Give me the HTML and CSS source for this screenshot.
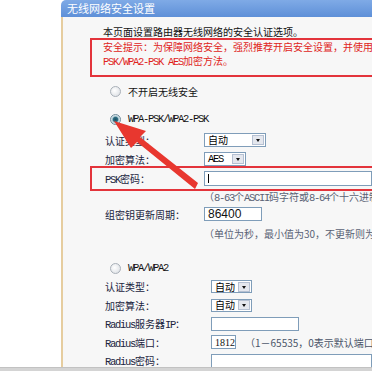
FILE: index.html
```html
<!DOCTYPE html>
<html lang="zh-CN">
<head>
    <meta charset="UTF-8">
    <meta name="viewport" content="width=device-width, initial-scale=1.0">
    <title>无线网络安全设置</title>
    <link rel="stylesheet" href="styles.css">
</head>
<body>
    <div class="screen">
        <div class="blank"></div>
        <div class="panel">
            <div class="head">无线网络安全设置</div>
            <div class="content">
                <p class="intro">本页面设置路由器无线网络的安全认证选项。<br>
                    <span class="warn">安全提示：为保障网络安全，强烈推荐开启安全设置，并使用<br><span class="en">PSK/WPA2-PSK AES</span>加密方法。</span>
                </p>

                <div class="opt first"><span class="radio"></span>不开启无线安全</div>

                <div class="opt second"><span class="radio on"></span><span class="en">WPA-PSK/WPA2-PSK</span></div>
                <div class="row top">
                    <span class="label">认证类型：</span>
                    <span class="sel w62"><span class="val">自动</span><span class="btn"></span></span>
                </div>
                <div class="row">
                    <span class="label">加密算法：</span>
                    <span class="sel w42"><span class="val en">AES</span><span class="btn"></span></span>
                </div>
                <div class="row">
                    <span class="label"><span class="en">PSK</span>密码：</span>
                    <span class="txt psk"><i class="caret"></i></span>
                </div>
                <div class="hint">（<span class="en">8-63</span>个<span class="en">ASCII</span>码字符或<span class="en">8-64</span>个十六进制字符）</div>
                <div class="row">
                    <span class="label">组密钥更新周期：</span>
                    <span class="txt w58 num">86400</span>
                </div>
                <div class="hint tall">（单位为秒，最小值为30，不更新则为0）</div>

                <div class="opt third"><span class="radio"></span><span class="en">WPA/WPA2</span></div>
                <div class="row sm">
                    <span class="label wide">认证类型：</span>
                    <span class="sel w41"><span class="val">自动</span><span class="btn"></span></span>
                </div>
                <div class="row sm">
                    <span class="label wide">加密算法：</span>
                    <span class="sel w41"><span class="val">自动</span><span class="btn"></span></span>
                </div>
                <div class="row sm">
                    <span class="label wide"><span class="en">Radius</span>服务器<span class="en">IP</span>：</span>
                    <span class="txt w88"></span>
                </div>
                <div class="row sm">
                    <span class="label wide"><span class="en">Radius</span>端口：</span>
                    <span class="txt w38 small">1812</span>
                    <span class="note">（1－65535，0表示默认端口1812）</span>
                </div>
                <div class="row sm">
                    <span class="label wide"><span class="en">Radius</span>密码：</span>
                    <span class="txt long"></span>
                </div>
            </div>
        </div>

        <div class="mark box1"></div>
        <div class="mark box2"></div>
        <svg class="arrow" width="372" height="371" viewBox="0 0 372 371">
            <polygon points="114,121 146,131 140,137 198,183 195,189 137,142 131,148" fill="#e8372f"/>
        </svg>
    </div>
    <div class="bottom"></div>
</body>
</html>
```

FILE: styles.css
```css
html, body{
    margin: 0;
    padding: 0;
    background-color: white;
}
body{
    font-family: "Noto Sans CJK SC", sans-serif;
    font-size: 10px;
    color: #111;
}
.screen{
    position: relative;
    display: flex;
    height: 367px;
    overflow: hidden;
}
.blank{
    width: 61px;
    flex-shrink: 0;
}
.panel{
    flex: 1;
    display: flex;
    flex-direction: column;
    min-width: 0;
}
.head{
    height: 17px;
    line-height: 17px;
    padding-left: 6px;
    color: white;
    font-size: 11px;
    background: linear-gradient(#7faae6, #5e90d8);
    border-radius: 5px 0 0 0;
    white-space: nowrap;
}
.content{
    flex: 1;
    border-left: 2px solid #e6cd9f;
    background-color: #f7f7f7;
    padding-top: 8px;
    white-space: nowrap;
}
.en{
    font-family: "Liberation Mono", monospace;
    font-size: 10.5px;
    letter-spacing: -1.3px;
}
.intro{
    margin: 0 0 0 40px;
    line-height: 14.5px;
}
.warn{
    color: #e0241c;
}
.opt{
    display: flex;
    align-items: center;
    height: 19px;
    padding-left: 47px;
    color: #111;
}
.opt.first{
    margin-top: 12px;
}
.opt.second{
    margin-top: 9px;
}
.opt.third{
    margin-top: 15px;
}
.radio{
    width: 9px;
    height: 9px;
    border: 1px solid #a9b0b8;
    border-radius: 50%;
    background: radial-gradient(circle at 40% 40%, #ffffff, #d7dbe0);
    margin-right: 7px;
}
.radio.on{
    border-color: #6f8a99;
    background: radial-gradient(circle, #1d4f63 0, #2c6c80 2.2px, #bcd4dc 3.4px, #e9eef2 5px);
}
.row{
    display: flex;
    align-items: center;
    height: 19px;
    padding-left: 42px;
    color: #1a2440;
}
.row.top{
    margin-top: 2px;
}
.row.sm{
    height: 18.5px;
}
.label{
    width: 99px;
    flex-shrink: 0;
}
.label.wide{
    width: 106px;
}
.sel{
    display: flex;
    align-items: center;
    justify-content: space-between;
    box-sizing: border-box;
    height: 14px;
    border: 1px solid #7f9db9;
    background-color: white;
    color: #000;
}
.w62{
    width: 62px;
}
.w42{
    width: 42px;
}
.w41{
    width: 41px;
    height: 13px;
}
.val{
    padding-left: 3px;
    line-height: 12px;
}
.btn{
    position: relative;
    box-sizing: border-box;
    width: 12px;
    height: 10px;
    margin-right: 1px;
    background-color: #e4e7ee;
    border: 1px solid #b5c0d2;
}
.btn::after{
    content: "";
    position: absolute;
    left: 3px;
    top: 3px;
    border-left: 2.5px solid transparent;
    border-right: 2.5px solid transparent;
    border-top: 3px solid #111;
}
.txt{
    display: flex;
    align-items: center;
    box-sizing: border-box;
    height: 14px;
    border: 1px solid #7f9db9;
    background-color: white;
    padding-left: 3px;
    color: #111;
}
.psk{
    width: 200px;
    height: 15px;
}
.caret{
    width: 1px;
    height: 9px;
    background-color: #000;
}
.w58{
    width: 58px;
}
.w88{
    width: 88px;
}
.w38{
    width: 38px;
}
.long{
    width: 200px;
}
.num{
    font-family: "Liberation Sans", sans-serif;
    font-size: 12px;
}
.small{
    font-family: "Liberation Serif", serif;
    font-size: 10px;
}
.note{
    margin-left: 9px;
    color: #4a5468;
}
.hint{
    height: 17px;
    line-height: 17px;
    padding-left: 141px;
    color: #5a6275;
}
.hint.tall{
    height: 20px;
    line-height: 20px;
}
.mark{
    position: absolute;
    left: 90px;
    width: 300px;
    box-sizing: border-box;
    border: 2px solid #e3343b;
}
.box1{
    top: 38px;
    height: 39px;
}
.box2{
    top: 166px;
    height: 25px;
}
.arrow{
    position: absolute;
    left: 0;
    top: 0;
    pointer-events: none;
}
.bottom{
    height: 4px;
    background-color: #d4d4d4;
    border-top: 1px solid #c2c2c2;
    box-sizing: border-box;
}
```
